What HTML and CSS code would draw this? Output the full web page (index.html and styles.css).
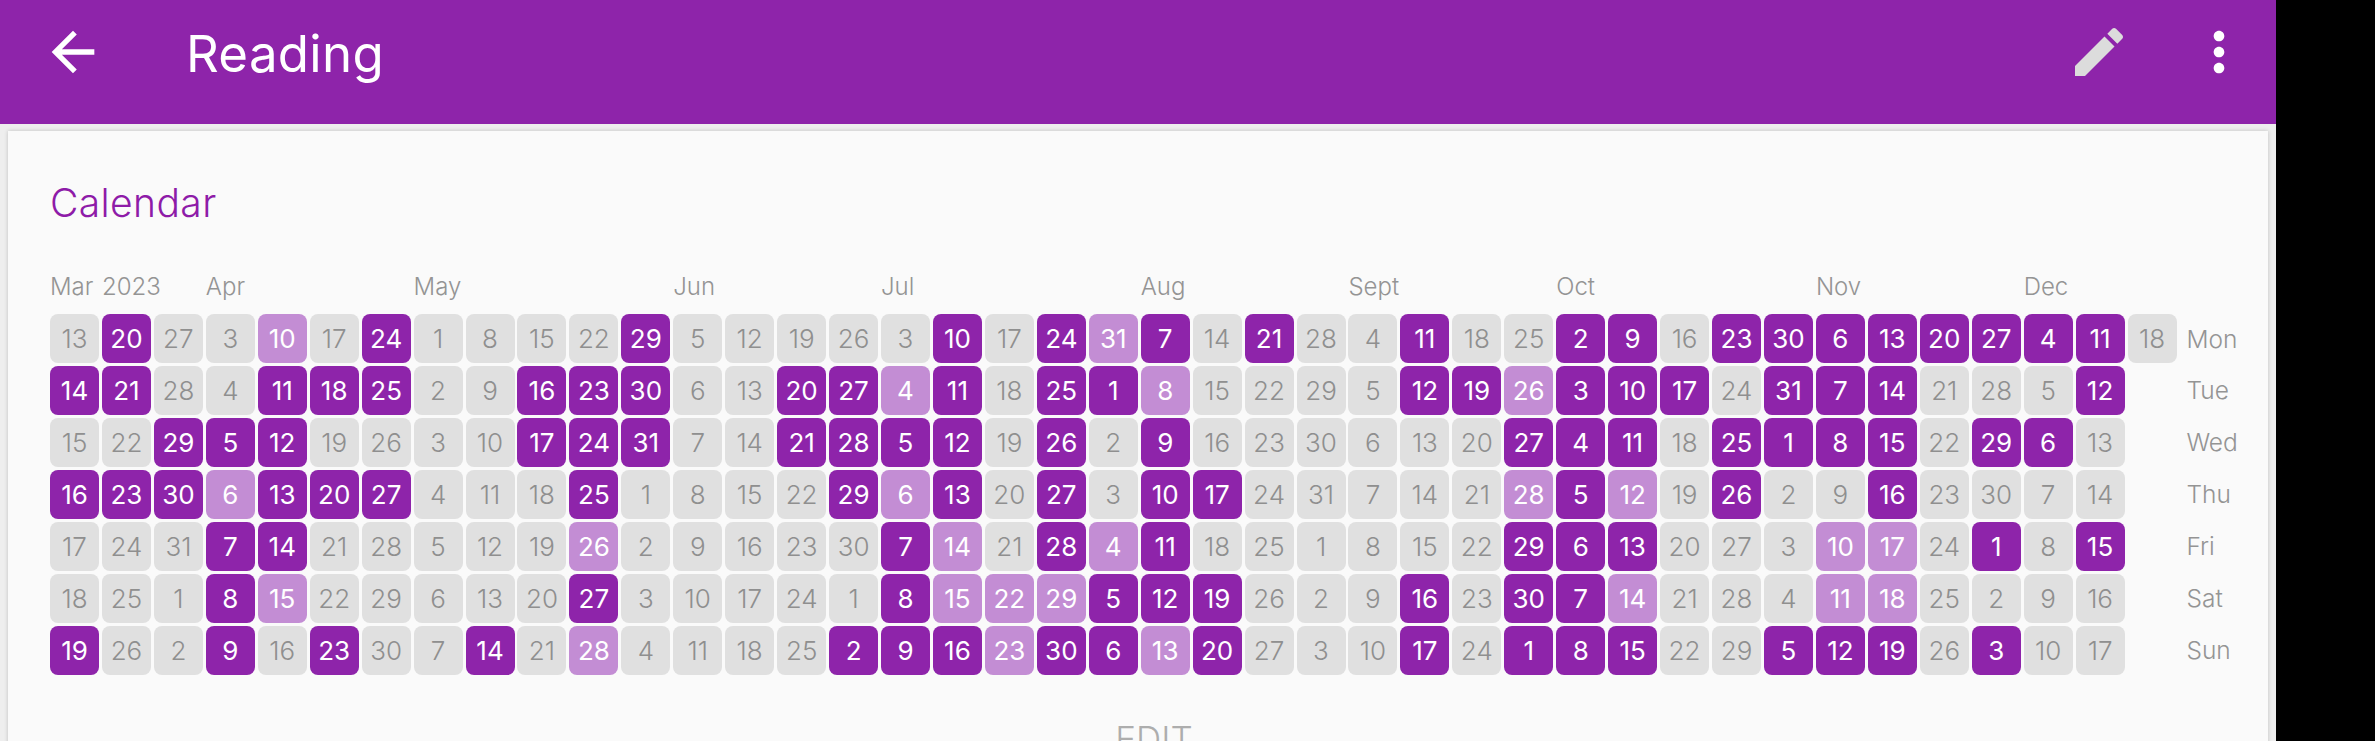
FILE: index.html
```html
<!DOCTYPE html>
<html lang="en">
<head>
    <meta charset="UTF-8">
    <meta name="viewport" content="width=device-width, initial-scale=1.0">
    <title>Reading</title>
    <link rel="stylesheet" href="styles.css">
</head>
<body>

    <div class="app">
        <header class="toolbar">
            <svg class="icon" viewBox="0 0 24 24"><path d="M20 11H7.83l5.59-5.59L12 4l-8 8 8 8 1.41-1.41L7.83 13H20v-2z"/></svg>
            <h1 class="toolbar-title">Reading</h1>
            <svg class="icon icon-edit" viewBox="0 0 24 24"><path d="M3 17.25V21h3.75L17.81 9.94l-3.75-3.75L3 17.25z"/><path d="M20.71 7.04c.39-.39.39-1.02 0-1.41l-2.34-2.34c-.39-.39-1.02-.39-1.41 0l-1.83 1.83 3.75 3.75 1.83-1.83z"/></svg>
            <svg class="icon icon-more" viewBox="0 0 24 24"><path d="M12 8c1.1 0 2-.9 2-2s-.9-2-2-2-2 .9-2 2 .9 2 2 2zm0 2c-1.1 0-2 .9-2 2s.9 2 2 2 2-.9 2-2-.9-2-2-2zm0 6c-1.1 0-2 .9-2 2s.9 2 2 2 2-.9 2-2-.9-2-2-2z"/></svg>
        </header>

        <main class="card">
            <h2 class="card-title">Calendar</h2>

            <div class="months">
                <span>Mar</span><span>2023</span><span class="m-apr">Apr</span><span class="m-may">May</span><span class="m-jun">Jun</span><span class="m-jul">Jul</span><span class="m-aug">Aug</span><span class="m-sep">Sept</span><span class="m-oct">Oct</span><span class="m-nov">Nov</span><span class="m-dec">Dec</span>
            </div>

            <div class="calendar">
                <!-- Mon -->
                <span class="day">13</span><span class="day on">20</span><span class="day">27</span><span class="day">3</span><span class="day half">10</span><span class="day">17</span><span class="day on">24</span><span class="day">1</span><span class="day">8</span><span class="day">15</span><span class="day">22</span><span class="day on">29</span><span class="day">5</span><span class="day">12</span><span class="day">19</span><span class="day">26</span><span class="day">3</span><span class="day on">10</span><span class="day">17</span><span class="day on">24</span><span class="day half">31</span><span class="day on">7</span><span class="day">14</span><span class="day on">21</span><span class="day">28</span><span class="day">4</span><span class="day on">11</span><span class="day">18</span><span class="day">25</span><span class="day on">2</span><span class="day on">9</span><span class="day">16</span><span class="day on">23</span><span class="day on">30</span><span class="day on">6</span><span class="day on">13</span><span class="day on">20</span><span class="day on">27</span><span class="day on">4</span><span class="day on">11</span><span class="day">18</span><span class="weekday">Mon</span>
                <!-- Tue -->
                <span class="day on">14</span><span class="day on">21</span><span class="day">28</span><span class="day">4</span><span class="day on">11</span><span class="day on">18</span><span class="day on">25</span><span class="day">2</span><span class="day">9</span><span class="day on">16</span><span class="day on">23</span><span class="day on">30</span><span class="day">6</span><span class="day">13</span><span class="day on">20</span><span class="day on">27</span><span class="day half">4</span><span class="day on">11</span><span class="day">18</span><span class="day on">25</span><span class="day on">1</span><span class="day half">8</span><span class="day">15</span><span class="day">22</span><span class="day">29</span><span class="day">5</span><span class="day on">12</span><span class="day on">19</span><span class="day half">26</span><span class="day on">3</span><span class="day on">10</span><span class="day on">17</span><span class="day">24</span><span class="day on">31</span><span class="day on">7</span><span class="day on">14</span><span class="day">21</span><span class="day">28</span><span class="day">5</span><span class="day on">12</span><span class="blank"></span><span class="weekday">Tue</span>
                <!-- Wed -->
                <span class="day">15</span><span class="day">22</span><span class="day on">29</span><span class="day on">5</span><span class="day on">12</span><span class="day">19</span><span class="day">26</span><span class="day">3</span><span class="day">10</span><span class="day on">17</span><span class="day on">24</span><span class="day on">31</span><span class="day">7</span><span class="day">14</span><span class="day on">21</span><span class="day on">28</span><span class="day on">5</span><span class="day on">12</span><span class="day">19</span><span class="day on">26</span><span class="day">2</span><span class="day on">9</span><span class="day">16</span><span class="day">23</span><span class="day">30</span><span class="day">6</span><span class="day">13</span><span class="day">20</span><span class="day on">27</span><span class="day on">4</span><span class="day on">11</span><span class="day">18</span><span class="day on">25</span><span class="day on">1</span><span class="day on">8</span><span class="day on">15</span><span class="day">22</span><span class="day on">29</span><span class="day on">6</span><span class="day">13</span><span class="blank"></span><span class="weekday">Wed</span>
                <!-- Thu -->
                <span class="day on">16</span><span class="day on">23</span><span class="day on">30</span><span class="day half">6</span><span class="day on">13</span><span class="day on">20</span><span class="day on">27</span><span class="day">4</span><span class="day">11</span><span class="day">18</span><span class="day on">25</span><span class="day">1</span><span class="day">8</span><span class="day">15</span><span class="day">22</span><span class="day on">29</span><span class="day half">6</span><span class="day on">13</span><span class="day">20</span><span class="day on">27</span><span class="day">3</span><span class="day on">10</span><span class="day on">17</span><span class="day">24</span><span class="day">31</span><span class="day">7</span><span class="day">14</span><span class="day">21</span><span class="day half">28</span><span class="day on">5</span><span class="day half">12</span><span class="day">19</span><span class="day on">26</span><span class="day">2</span><span class="day">9</span><span class="day on">16</span><span class="day">23</span><span class="day">30</span><span class="day">7</span><span class="day">14</span><span class="blank"></span><span class="weekday">Thu</span>
                <!-- Fri -->
                <span class="day">17</span><span class="day">24</span><span class="day">31</span><span class="day on">7</span><span class="day on">14</span><span class="day">21</span><span class="day">28</span><span class="day">5</span><span class="day">12</span><span class="day">19</span><span class="day half">26</span><span class="day">2</span><span class="day">9</span><span class="day">16</span><span class="day">23</span><span class="day">30</span><span class="day on">7</span><span class="day half">14</span><span class="day">21</span><span class="day on">28</span><span class="day half">4</span><span class="day on">11</span><span class="day">18</span><span class="day">25</span><span class="day">1</span><span class="day">8</span><span class="day">15</span><span class="day">22</span><span class="day on">29</span><span class="day on">6</span><span class="day on">13</span><span class="day">20</span><span class="day">27</span><span class="day">3</span><span class="day half">10</span><span class="day half">17</span><span class="day">24</span><span class="day on">1</span><span class="day">8</span><span class="day on">15</span><span class="blank"></span><span class="weekday">Fri</span>
                <!-- Sat -->
                <span class="day">18</span><span class="day">25</span><span class="day">1</span><span class="day on">8</span><span class="day half">15</span><span class="day">22</span><span class="day">29</span><span class="day">6</span><span class="day">13</span><span class="day">20</span><span class="day on">27</span><span class="day">3</span><span class="day">10</span><span class="day">17</span><span class="day">24</span><span class="day">1</span><span class="day on">8</span><span class="day half">15</span><span class="day half">22</span><span class="day half">29</span><span class="day on">5</span><span class="day on">12</span><span class="day on">19</span><span class="day">26</span><span class="day">2</span><span class="day">9</span><span class="day on">16</span><span class="day">23</span><span class="day on">30</span><span class="day on">7</span><span class="day half">14</span><span class="day">21</span><span class="day">28</span><span class="day">4</span><span class="day half">11</span><span class="day half">18</span><span class="day">25</span><span class="day">2</span><span class="day">9</span><span class="day">16</span><span class="blank"></span><span class="weekday">Sat</span>
                <!-- Sun -->
                <span class="day on">19</span><span class="day">26</span><span class="day">2</span><span class="day on">9</span><span class="day">16</span><span class="day on">23</span><span class="day">30</span><span class="day">7</span><span class="day on">14</span><span class="day">21</span><span class="day half">28</span><span class="day">4</span><span class="day">11</span><span class="day">18</span><span class="day">25</span><span class="day on">2</span><span class="day on">9</span><span class="day on">16</span><span class="day half">23</span><span class="day on">30</span><span class="day on">6</span><span class="day half">13</span><span class="day on">20</span><span class="day">27</span><span class="day">3</span><span class="day">10</span><span class="day on">17</span><span class="day">24</span><span class="day on">1</span><span class="day on">8</span><span class="day on">15</span><span class="day">22</span><span class="day">29</span><span class="day on">5</span><span class="day on">12</span><span class="day on">19</span><span class="day">26</span><span class="day on">3</span><span class="day">10</span><span class="day">17</span><span class="blank"></span><span class="weekday">Sun</span>
            </div>

            <button class="edit-button">EDIT</button>
        </main>
    </div>

</body>
</html>
```
FILE: styles.css
```css
html, body {
    margin: 0;
    padding: 0;
    height: 100%;
    overflow: hidden;
    background-color: #000;
}
.app {
    width: 2276px;
    height: 741px;
    overflow: hidden;
    background-color: #eeeeee;
    font-family: Inter, 'Open Sans', sans-serif;
}
.toolbar {
    display: flex;
    align-items: center;
    height: 124px;
    box-sizing: border-box;
    padding: 0 25px 20px 41px;
    background-color: #8e24aa;
    color: #fff;
}
.icon {
    width: 64px;
    height: 64px;
    fill: #fff;
    flex: none;
}
.icon-edit {
    fill: #dcdcdc;
    margin-right: 56px;
}
.toolbar-title {
    flex: 1;
    margin: 3px 0 0 81px;
    font-size: 51px;
    font-weight: 400;
    letter-spacing: 0.3px;
}
.card {
    margin: 7px 8px 0;
    height: 700px;
    box-sizing: border-box;
    padding: 49px 10px 0 42px;
    background-color: #fafafa;
    box-shadow: 0 0 4px rgba(0, 0, 0, 0.2);
}
.card-title {
    margin: 0;
    height: 93px;
    font-size: 39px;
    line-height: 46px;
    font-weight: 300;
    letter-spacing: 0.4px;
    color: #8e1ba8;
}
.months, .calendar {
    display: grid;
    grid-template-columns: repeat(41, 49px) auto;
    column-gap: 2.95px;
}
.months {
    height: 41px;
    font-size: 24px;
    line-height: 28px;
    font-weight: 300;
    color: #949494;
}
.m-apr { grid-column: 4; }
.m-may { grid-column: 8; }
.m-jun { grid-column: 13; }
.m-jul { grid-column: 17; }
.m-aug { grid-column: 22; }
.m-sep { grid-column: 26; }
.m-oct { grid-column: 30; }
.m-nov { grid-column: 35; }
.m-dec { grid-column: 39; }
.calendar {
    grid-auto-rows: 49px;
    row-gap: 2.95px;
}
.day {
    display: flex;
    align-items: center;
    justify-content: center;
    border-radius: 8px;
    font-size: 26px;
    font-weight: 300;
    background-color: #e0e0e0;
    color: #8f8f8f;
}
.day.on {
    background-color: #8e24aa;
    color: #fff;
    font-weight: 400;
}
.day.half {
    background-color: #c38dd4;
    color: #fff;
    font-weight: 400;
}
.weekday {
    align-self: center;
    margin-left: 7px;
    font-size: 24.5px;
    font-weight: 300;
    color: #949494;
}
.edit-button {
    display: block;
    margin: 44px auto 0;
    padding: 0;
    border: none;
    background: none;
    font-family: inherit;
    font-size: 35px;
    font-weight: 300;
    line-height: 40px;
    color: #adadad;
}
```
